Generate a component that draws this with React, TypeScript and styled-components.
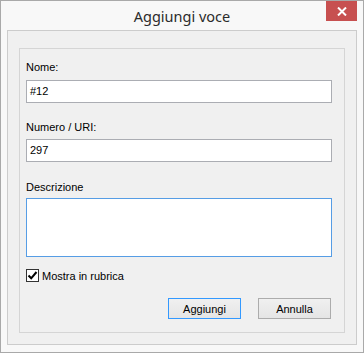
import React from "react";
import styled, { createGlobalStyle } from "styled-components";

const GlobalStyle = createGlobalStyle`
  html, body {
    margin: 0;
    padding: 0;
    background: #ffffff;
  }
  * {
    box-sizing: border-box;
  }
`;

const Window = styled.div`
  width: 364px;
  height: 353px;
  border: 1px solid #a9a9a9;
  background: #f8f8f8;
  display: flex;
  flex-direction: column;
  font-family: "Liberation Sans", Arial, sans-serif;
  font-size: 11px;
  color: #000;
`;

const TitleBar = styled.div`
  height: 29px;
  display: grid;
  grid-template-columns: 1fr auto 1fr;
  align-items: start;
`;

const Title = styled.div`
  grid-column: 2;
  font-family: "Noto Sans", "Open Sans", sans-serif;
  font-size: 14.5px;
  color: #2b2b2b;
  line-height: 20px;
  padding-top: 5px;
`;

const CloseButton = styled.div`
  grid-column: 3;
  justify-self: end;
  width: 31px;
  height: 20px;
  margin-right: 6px;
  background: #c75050;
  display: flex;
  align-items: center;
  justify-content: center;
`;

const Body = styled.div`
  flex: 1;
  padding: 0 6px 7px 6px;
  display: flex;
`;

const Panel = styled.div`
  flex: 1;
  border: 1px solid #cccccc;
  background: #f0f0f0;
  padding: 17px 11px 11px 11px;
  display: flex;
`;

const Group = styled.div`
  flex: 1;
  border: 1px solid #d5d5d5;
  padding: 11px 12px 0 6px;
  display: flex;
  flex-direction: column;
`;

const Label = styled.div<{ $top: number }>`
  height: 14px;
  line-height: 14px;
  margin-top: ${(p) => p.$top}px;
  color: #000;
`;

const Input = styled.div<{ $top: number }>`
  height: 23px;
  margin-top: ${(p) => p.$top}px;
  border: 1px solid #abadb3;
  background: #ffffff;
  padding: 0 3px;
  line-height: 21px;
  font-size: 11px;
`;

const TextArea = styled.div<{ $top: number }>`
  height: 59px;
  margin-top: ${(p) => p.$top}px;
  border: 1px solid #569de5;
  background: #ffffff;
`;

const CheckRow = styled.div`
  margin-top: 12px;
  display: flex;
  align-items: center;
  gap: 3px;
  height: 13px;
`;

const CheckBox = styled.div`
  width: 13px;
  height: 13px;
  border: 1px solid #333333;
  background: #ffffff;
  display: flex;
  align-items: center;
  justify-content: center;
`;

const Buttons = styled.div`
  margin-top: 16px;
  display: flex;
  justify-content: flex-end;
  gap: 17px;
  padding-right: 1px;
`;

const Button = styled.div<{ $default?: boolean }>`
  width: 73px;
  height: 21px;
  border: 1px solid ${(p) => (p.$default ? "#3399ff" : "#acacac")};
  background: linear-gradient(#f0f0f0, #e5e5e5);
  display: flex;
  align-items: center;
  justify-content: center;
  font-size: 11px;
`;

export default function App() {
  return (
    <>
      <GlobalStyle />
      <Window>
        <TitleBar>
          <Title>Aggiungi voce</Title>
          <CloseButton>
            <svg width="10" height="9" viewBox="0 0 10 9">
              <path d="M1 0.5 L9 8.5 M9 0.5 L1 8.5" stroke="#ffffff" strokeWidth="2" />
            </svg>
          </CloseButton>
        </TitleBar>
        <Body>
          <Panel>
            <Group>
              <Label $top={0}>Nome:</Label>
              <Input $top={6}>#12</Input>
              <Label $top={17}>Numero / URI:</Label>
              <Input $top={5}>297</Input>
              <Label $top={18}>Descrizione</Label>
              <TextArea $top={4} />
              <CheckRow>
                <CheckBox>
                  <svg width="11" height="11" viewBox="0 0 11 11">
                    <path d="M1.5 5.5 L4.2 8.3 L9.5 2" stroke="#000" strokeWidth="2" fill="none" />
                  </svg>
                </CheckBox>
                <span>Mostra in rubrica</span>
              </CheckRow>
              <Buttons>
                <Button $default>Aggiungi</Button>
                <Button>Annulla</Button>
              </Buttons>
            </Group>
          </Panel>
        </Body>
      </Window>
    </>
  );
}
